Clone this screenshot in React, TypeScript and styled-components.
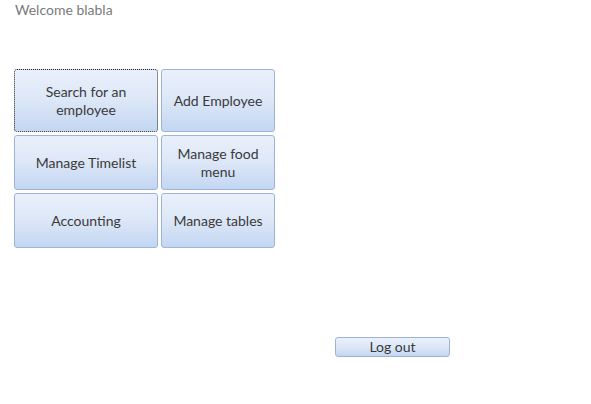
import React from "react";
import styled, { createGlobalStyle } from "styled-components";

const Global = createGlobalStyle`
  html, body { margin: 0; padding: 0; background: #ffffff; }
  body { font-family: Lato, "Open Sans", "Liberation Sans", sans-serif; }
`;

const Page = styled.div`
  width: 591px;
  height: 404px;
  display: flex;
  flex-direction: column;
  box-sizing: border-box;
  padding: 2px 0 0 14px;
`;

const Welcome = styled.div`
  font-size: 14px;
  line-height: 16px;
  color: #7a7a7a;
  margin-left: 1px;
`;

const Grid = styled.div`
  display: grid;
  grid-template-columns: 144px 114px;
  grid-template-rows: 63px 55px 55px;
  gap: 3px;
  margin-top: 51px;
`;

const Tile = styled.button<{ $focused?: boolean }>`
  box-sizing: border-box;
  margin: 0;
  padding: 0 8px;
  font-family: Lato, "Open Sans", "Liberation Sans", sans-serif;
  font-size: 14px;
  line-height: 18px;
  color: #3a3a3a;
  border-radius: 3px;
  border: 1px ${(p) => (p.$focused ? "dotted #2a2a2a" : "solid #9db4d6")};
  background: linear-gradient(to bottom, #eaf0fb 0%, #dce7f7 50%, #c3d6f2 100%);
  text-align: center;
  cursor: pointer;
`;

const Footer = styled.div`
  display: flex;
  margin-top: 89px;
  padding-left: 321px;
`;

const SmallButton = styled.button`
  box-sizing: border-box;
  width: 115px;
  height: 20px;
  margin: 0;
  padding: 0;
  font-family: Lato, "Open Sans", "Liberation Sans", sans-serif;
  font-size: 14px;
  line-height: 16px;
  color: #3a3a3a;
  border-radius: 3px;
  border: 1px solid #9db4d6;
  background: linear-gradient(to bottom, #eaf0fb 0%, #dce7f7 50%, #c3d6f2 100%);
  cursor: pointer;
`;

const tiles = [
  { label: "Search for an employee", focused: true },
  { label: "Add Employee" },
  { label: "Manage Timelist" },
  { label: "Manage food menu" },
  { label: "Accounting" },
  { label: "Manage tables" },
];

export default function App() {
  return (
    <>
      <Global />
      <Page>
        <Welcome>Welcome blabla</Welcome>
        <Grid>
          {tiles.map((t) => (
            <Tile key={t.label} $focused={t.focused}>
              {t.label}
            </Tile>
          ))}
        </Grid>
        <Footer>
          <SmallButton>Log out</SmallButton>
        </Footer>
      </Page>
    </>
  );
}
